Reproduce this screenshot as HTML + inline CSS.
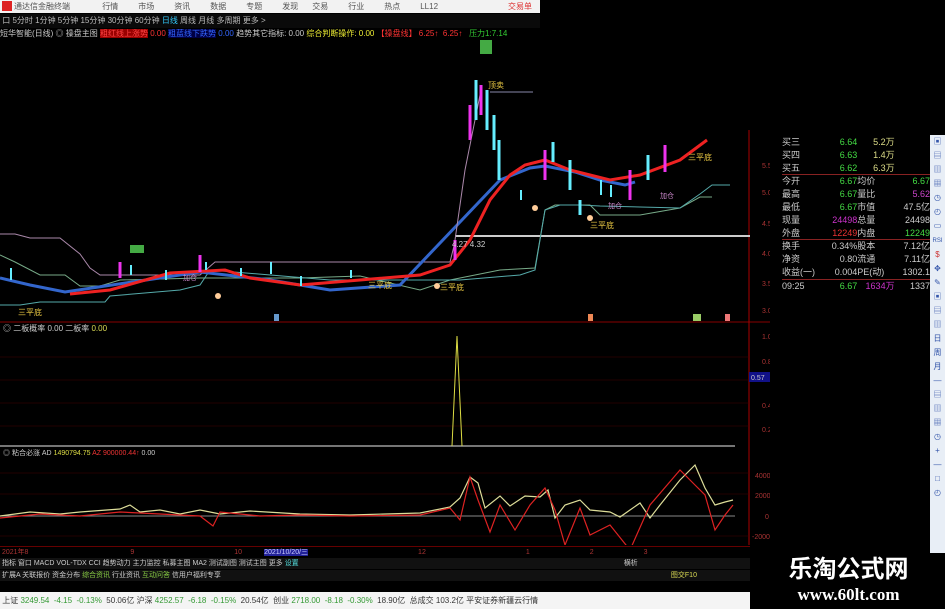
<!DOCTYPE html>
<html><head><meta charset="utf-8"><style>
*{margin:0;padding:0}
body{width:945px;height:609px;background:#000;overflow:hidden;position:relative;font-family:"Liberation Sans","Noto Sans CJK SC",sans-serif;font-size:9px;color:#ccc}
.a{position:absolute;white-space:nowrap}
td{padding:0;height:12.8px;line-height:12.8px}
</style></head><body>
<!-- top menu -->
<div class="a" style="left:0;top:0;width:540px;height:13px;background:#f2f2f2;color:#555;font-size:8px;line-height:13px">
<span style="display:inline-block;width:10px;height:10px;background:#d22;margin:1px 2px 0 2px;vertical-align:top"></span>通达信金融终端
<span style="margin-left:30px">行情</span><span style="margin-left:20px">市场</span><span style="margin-left:20px">资讯</span><span style="margin-left:20px">数据</span><span style="margin-left:20px">专题</span><span style="margin-left:20px">发现</span><span style="margin-left:14px">交易</span><span style="margin-left:20px">行业</span><span style="margin-left:20px">热点</span><span style="margin-left:20px">LL12</span><span style="position:absolute;left:508px;color:#d33">交易单</span></div>
<div class="a" style="left:0;top:14px;width:540px;height:14px;background:#0a0a0a;color:#bbb;font-size:8px;line-height:14px">&nbsp;口 5分时 1分钟 5分钟 15分钟 30分钟 60分钟 <span style="color:#3cf">日线</span> 周线 月线 多周期 更多 &gt;</div>
<div class="a" style="left:0;top:29px;font-size:8px;line-height:10px;color:#ccc">短华智能(日线) ◎ 操盘主图 <span style="background:#900;color:#f44">粗红线上涨势</span> <span style="color:#f33">0.00</span> <span style="background:#004;color:#36f">粗蓝线下跌势</span> <span style="color:#36f">0.00</span> 趋势其它指标: 0.00 <span style="color:#ee3">综合判断操作: 0.00</span> <span style="color:#f33">【操盘线】 6.25↑ &nbsp;6.25↑</span> &nbsp;&nbsp;<span style="color:#3c3">压力1:7.14</span></div>

<svg class="a" style="left:0;top:38px" width="770" height="507" viewBox="0 38 770 507">
<line x1="0" y1="322" x2="770" y2="322" stroke="#800" stroke-width="1"/>
<line x1="0" y1="446" x2="735" y2="446" stroke="#bbb" stroke-width="1.2"/>
<line x1="749" y1="130" x2="749" y2="545" stroke="#a00"/>
<g stroke="#400" stroke-width="0.6">
<line x1="0" y1="357" x2="749" y2="357"/><line x1="0" y1="380" x2="749" y2="380"/><line x1="0" y1="403" x2="749" y2="403"/><line x1="0" y1="426" x2="749" y2="426"/>
<line x1="0" y1="473" x2="749" y2="473"/><line x1="0" y1="494" x2="749" y2="494"/><line x1="0" y1="536" x2="749" y2="536"/>
</g>
<line x1="455" y1="236" x2="750" y2="236" stroke="#ccc" stroke-width="2"/>
<polyline fill="none" stroke="#a8a" stroke-width="1" points="0,234 15,234 30,238 60,238 80,254 90,268 100,275 200,275 215,262 380,262 450,262 455,242"/>
<polyline fill="none" stroke="#7a8" stroke-width="1" points="0,255 15,262 40,275 65,275 80,286 100,286 120,280 200,278 300,278 360,276 420,290 450,280 500,270 535,268 545,210 555,205 590,205 600,215 640,215 680,208 700,197 712,197"/>
<polyline fill="none" stroke="#5aa" stroke-width="1" points="0,305 20,305 40,302 105,302 110,296 180,290 200,285 210,270 330,280 460,280 520,275 535,270 545,210 560,205 580,205 600,206 680,208 700,194 712,185 730,185"/>
<polyline fill="none" stroke="#36c" stroke-width="3" points="0,278 30,285 65,292 200,272 270,280 330,290 400,285 500,180 530,168 545,166 575,172 600,180 625,185 635,182"/>
<polyline fill="none" stroke="#e22" stroke-width="3" points="70,294 110,290 170,273 225,270 250,278 300,285 360,280 420,275 450,265 470,240 490,200 510,175 525,165 545,160 570,170 610,180 640,175 680,160 707,140"/>
<polyline fill="none" stroke="#a8a" stroke-width="1" points="455,240 465,170 475,120 480,95"/>
<line x1="490" y1="92" x2="533" y2="92" stroke="#88a"/>
<g stroke-width="3">
<line x1="470" y1="105" x2="470" y2="140" stroke="#e3e"/>
<line x1="476" y1="80" x2="476" y2="120" stroke="#6ef"/>
<line x1="481" y1="85" x2="481" y2="115" stroke="#e3e"/>
<line x1="487" y1="90" x2="487" y2="130" stroke="#6ef"/>
<line x1="494" y1="115" x2="494" y2="150" stroke="#6ef"/>
<line x1="499" y1="140" x2="499" y2="180" stroke="#6ef"/>
<line x1="455" y1="240" x2="455" y2="260" stroke="#e3e"/>
<line x1="120" y1="262" x2="120" y2="278" stroke="#e3e"/>
<line x1="200" y1="255" x2="200" y2="272" stroke="#e3e"/>
<line x1="545" y1="150" x2="545" y2="180" stroke="#e3e"/>
<line x1="553" y1="142" x2="553" y2="162" stroke="#6ef"/>
<line x1="570" y1="160" x2="570" y2="190" stroke="#6ef"/>
<line x1="630" y1="170" x2="630" y2="200" stroke="#e3e"/>
<line x1="648" y1="155" x2="648" y2="180" stroke="#6ef"/>
<line x1="665" y1="145" x2="665" y2="172" stroke="#e3e"/>
<line x1="580" y1="200" x2="580" y2="215" stroke="#6ef"/>
</g>
<g fill="#6ef"><rect x="10" y="268" width="2" height="12"/><rect x="130" y="265" width="2" height="10"/><rect x="165" y="270" width="2" height="10"/><rect x="205" y="262" width="2" height="8"/><rect x="240" y="268" width="2" height="8"/><rect x="270" y="262" width="2" height="12"/><rect x="300" y="276" width="2" height="10"/><rect x="350" y="270" width="2" height="8"/><rect x="520" y="190" width="2" height="10"/><rect x="600" y="180" width="2" height="15"/><rect x="610" y="185" width="2" height="12"/></g>
<g font-size="8" fill="#ec4">
<text x="18" y="315">三平底</text><text x="368" y="288">三平底</text><text x="440" y="290">三平底</text><text x="590" y="228">三平底</text><text x="688" y="160">三平底</text><text x="488" y="88">顶卖</text>
</g>
<g font-size="7" fill="#c8c"><text x="183" y="280">加仓</text><text x="608" y="208">加仓</text><text x="660" y="198">加仓</text></g>
<text x="452" y="247" font-size="8" fill="#ccc">4.27 4.32</text>
<rect x="130" y="245" width="14" height="8" fill="#4a4"/><rect x="480" y="40" width="12" height="14" fill="#4a4"/>
<circle cx="218" cy="296" r="3" fill="#fc9"/><circle cx="437" cy="286" r="3" fill="#fc9"/><circle cx="535" cy="208" r="3" fill="#fc9"/><circle cx="590" cy="218" r="3" fill="#fc9"/>
<rect x="274" y="314" width="5" height="7" fill="#69c"/><rect x="588" y="314" width="5" height="7" fill="#e85"/><rect x="693" y="314" width="8" height="7" fill="#9c6"/><rect x="725" y="314" width="5" height="7" fill="#e77"/>
<text x="3" y="331" font-size="8" fill="#ccc">◎ 二板概率 <tspan fill="#ccc">0.00</tspan> 二板率 <tspan fill="#dd5">0.00</tspan></text>
<polyline fill="none" stroke="#dd4" points="452,446 457,336 462,446"/>
<text x="3" y="455" font-size="7" fill="#ccc">◎ 粘合必涨 AD <tspan fill="#dd4">1490794.75</tspan> <tspan fill="#e33">AZ 900000.44↑</tspan> 0.00</text>
<line x1="0" y1="516" x2="735" y2="516" stroke="#888"/>
<polyline fill="none" stroke="#dd9" stroke-width="1.2" points="0,516 30,512 60,514 80,512 120,509 130,505 140,512 160,510 180,514 200,510 220,514 250,511 300,514 350,515 420,513 450,507 460,498 470,477 478,483 485,508 500,496 510,506 525,496 540,497 548,490 555,518 565,505 580,500 590,510 610,512 620,517 640,503 650,518 660,505 680,480 695,465 705,488 715,505 725,502 733,500"/>
<polyline fill="none" stroke="#d22" stroke-width="1.2" points="0,518 40,514 80,516 120,512 160,514 200,516 213,526 220,512 260,516 300,515 350,516 420,515 450,508 460,520 470,477 478,500 490,532 500,505 515,530 530,505 545,488 555,510 565,545 580,508 590,535 610,525 630,550 650,505 680,470 695,485 705,495 715,530 725,515 733,505"/>
<g font-size="7" fill="#a33"><text x="762" y="168">5.50</text><text x="762" y="195">5.00</text><text x="762" y="226">4.50</text><text x="762" y="256">4.00</text><text x="762" y="286">3.50</text><text x="762" y="313">3.00</text>
<text x="762" y="339">1.00</text><text x="762" y="364">0.80</text><text x="762" y="408">0.40</text><text x="762" y="432">0.20</text>
<text x="755" y="478">40000</text><text x="755" y="498">20000</text><text x="765" y="519">0</text><text x="752" y="539">-20000</text></g>
<rect x="749" y="372" width="21" height="10" fill="#118"/><text x="751" y="380" font-size="7" fill="#ccc">0.57</text>
</svg>
<div class="a" style="left:782px;top:136px;width:148px;font-size:9px;color:#ccc">
<table style="border-collapse:collapse;font-size:9px;width:148px"><tbody>
<tr><td>买三</td><td style="color:#4d4;text-align:right">6.64</td><td style="color:#dd8;text-align:right">5.2万</td><td></td></tr>
<tr><td>买四</td><td style="color:#4d4;text-align:right">6.63</td><td style="color:#dd8;text-align:right">1.4万</td><td></td></tr>
<tr style="border-bottom:1px solid #822"><td>买五</td><td style="color:#4d4;text-align:right">6.62</td><td style="color:#dd8;text-align:right">6.3万</td><td></td></tr>
<tr><td>今开</td><td style="color:#4d4;text-align:right">6.67</td><td>均价</td><td style="color:#4d4;text-align:right">6.67</td></tr>
<tr><td>最高</td><td style="color:#4d4;text-align:right">6.67</td><td>量比</td><td style="color:#c4c;text-align:right">5.62</td></tr>
<tr><td>最低</td><td style="color:#4d4;text-align:right">6.67</td><td>市值</td><td style="text-align:right">47.5亿</td></tr>
<tr><td>现量</td><td style="color:#c3c;text-align:right">24498</td><td>总量</td><td style="text-align:right">24498</td></tr>
<tr style="border-bottom:1px solid #822"><td>外盘</td><td style="color:#e33;text-align:right">12249</td><td>内盘</td><td style="color:#4d4;text-align:right">12249</td></tr>
<tr><td>换手</td><td style="text-align:right">0.34%</td><td>股本</td><td style="text-align:right">7.12亿</td></tr>
<tr><td>净资</td><td style="text-align:right">0.80</td><td>流通</td><td style="text-align:right">7.11亿</td></tr>
<tr style="border-bottom:1px solid #822"><td>收益(一)</td><td style="text-align:right">0.004</td><td>PE(动)</td><td style="text-align:right">1302.1</td></tr>
<tr><td>09:25</td><td style="color:#4d4;text-align:right">6.67</td><td style="color:#c3c;text-align:right">1634万</td><td style="text-align:right">1337</td></tr>
</tbody></table></div>
<div class="a" style="left:930px;top:135px;width:15px;height:420px;background:#e8eef6"></div>
<div class="a" style="left:930px;top:135px;width:15px;font-size:8px;color:#35a;line-height:14px;text-align:center">▣<br>▤<br>▥<br>▦<br>◷<br>◴<br>▭<br><span style="font-size:6px">RSI</span><br><span style="color:#c33">$</span><br>✥<br>✎<br>▣<br>▤<br>▥<br>日<br>周<br>月<br>—<br>▤<br>▥<br>▦<br>◷<br>+<br>—<br>□<br>◴</div>
<div class="a" style="left:0;top:546px;width:750px;height:11px;font-size:7px;color:#a33;line-height:11px;border-top:1px solid #600">&nbsp;2021年8 <span style="margin-left:100px">9</span><span style="margin-left:100px">10</span><span style="margin-left:22px;background:#229;color:#ccf">2021/10/20/三</span><span style="margin-left:110px">12</span><span style="margin-left:100px">1</span><span style="margin-left:60px">2</span><span style="margin-left:50px">3</span></div>
<div class="a" style="left:0;top:558px;width:750px;height:11px;font-size:7px;color:#ccc;line-height:11px;background:#111">&nbsp;指标 窗口 MACD VOL-TDX CCI 趋势动力 主力监控 私募主图 MA2 测试副图 测试主图 更多 <span style="color:#5dd">设置</span><span style="margin-left:325px">横析</span></div>
<div class="a" style="left:0;top:570px;width:750px;height:11px;font-size:7px;color:#ccc;line-height:11px;background:#111">&nbsp;扩展A 关联报价 资金分布 <span style="color:#8c4">综合资讯</span> 行业资讯 <span style="color:#8c4">互动问答</span> 信用户福利专享<span style="margin-left:450px;color:#dd5">图交F10</span></div>
<div class="a" style="left:0;top:592px;width:750px;height:17px;background:#f4f4f4;font-size:8px;line-height:17px;color:#393">&nbsp;<span style="color:#333">上证</span> 3249.54 &nbsp;-4.15 &nbsp;-0.13% &nbsp;<span style="color:#333">50.06亿</span> <span style="color:#333">沪深</span> 4252.57 &nbsp;-6.18 &nbsp;-0.15% &nbsp;<span style="color:#333">20.54亿</span> &nbsp;<span style="color:#333">创业</span> 2718.00 &nbsp;-8.18 &nbsp;-0.30% &nbsp;<span style="color:#333">18.90亿</span> &nbsp;<span style="color:#333">总成交 103.2亿 平安证券新疆云行情</span></div>
<div class="a" style="left:752px;top:553px;width:193px;height:56px;background:#000;color:#fff;text-align:center">
<div style="font-size:24px;font-weight:bold;line-height:30px;margin-top:2px">乐淘公式网</div>
<div style="font-family:'Liberation Serif',serif;font-size:17px;font-weight:bold;line-height:20px">www.60lt.com</div></div>
</body></html>
